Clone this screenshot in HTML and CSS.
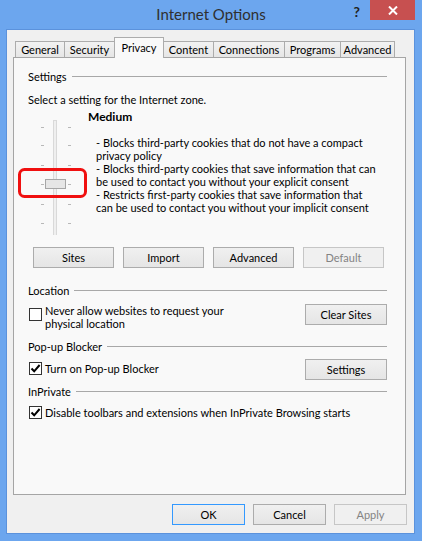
FILE: index.html
```html
<!DOCTYPE html>
<html>
<head>
<meta charset="utf-8">
<link rel="stylesheet" href="styles.css">
</head>
<body>
<div class="window">
  <header class="titlebar">
    <div></div>
    <div class="title">Internet Options</div>
    <div class="controls">
      <span class="help">?</span>
      <span class="close"><svg width="10" height="9" viewBox="0 0 10 9"><path d="M1 0.5 L9 8.5 M9 0.5 L1 8.5" stroke="#fff" stroke-width="2"/></svg></span>
    </div>
  </header>
  <div class="client">
    <nav class="tabs">
      <span class="tab t-general">General</span>
      <span class="tab t-security">Security</span>
      <span class="tab t-privacy selected">Privacy</span>
      <span class="tab t-content">Content</span>
      <span class="tab t-connections">Connections</span>
      <span class="tab t-programs">Programs</span>
      <span class="tab t-advanced">Advanced</span>
    </nav>
    <section class="panel">
      <div class="group-head"><span>Settings</span><i class="rule"></i></div>
      <p class="zone">Select a setting for the Internet zone.</p>
      <div class="privacy">
        <svg class="slider" width="70" height="125" viewBox="0 0 70 125">
          <rect x="35.5" y="10.5" width="3" height="120" fill="#efefef" stroke="#d9d9d9"/>
          <g fill="#b8b8b8">
            <rect x="23" y="17" width="3" height="1"/><rect x="50" y="17" width="3" height="1"/>
            <rect x="23" y="35" width="3" height="1"/><rect x="50" y="35" width="3" height="1"/>
            <rect x="23" y="55" width="3" height="1"/><rect x="50" y="55" width="3" height="1"/>
            <rect x="23" y="74" width="3" height="1"/><rect x="50" y="74" width="3" height="1"/>
            <rect x="23" y="94" width="3" height="1"/><rect x="50" y="94" width="3" height="1"/>
            <rect x="23" y="113" width="3" height="1"/><rect x="50" y="113" width="3" height="1"/>
          </g>
          <rect x="27.5" y="69.5" width="20" height="9" fill="#e6e6e6" stroke="#a6a6a6"/>
          <rect x="1.5" y="59.5" width="66" height="27" rx="5" fill="none" stroke="#f01010" stroke-width="3"/>
        </svg>
        <div class="level">
          <div class="level-name">Medium</div>
          <div class="level-desc">- Blocks third-party cookies that do not have a compact<br>privacy policy<br>- Blocks third-party cookies that save information that can<br>be used to contact you without your explicit consent<br>- Restricts first-party cookies that save information that<br>can be used to contact you without your implicit consent</div>
        </div>
      </div>
      <div class="btn-row">
        <span class="btn">Sites</span>
        <span class="btn">Import</span>
        <span class="btn">Advanced</span>
        <span class="btn disabled">Default</span>
      </div>

      <div class="group-head g-location"><span>Location</span><i class="rule"></i></div>
      <div class="opt-row r-location">
        <label class="check c-location"><span class="box"></span><span>Never allow websites to request your<br>physical location</span></label>
        <span class="btn btn-side">Clear Sites</span>
      </div>

      <div class="group-head g-popup"><span>Pop-up Blocker</span><i class="rule"></i></div>
      <div class="opt-row r-popup">
        <label class="check c-popup"><span class="box"><svg width="11" height="11" viewBox="0 0 11 11"><path d="M1.5 5.5 L4.2 8.3 L9.6 2" fill="none" stroke="#000" stroke-width="2"/></svg></span><span>Turn on Pop-up Blocker</span></label>
        <span class="btn btn-side">Settings</span>
      </div>

      <div class="group-head g-inprivate"><span>InPrivate</span><i class="rule"></i></div>
      <label class="check c-inprivate"><span class="box"><svg width="11" height="11" viewBox="0 0 11 11"><path d="M1.5 5.5 L4.2 8.3 L9.6 2" fill="none" stroke="#000" stroke-width="2"/></svg></span><span>Disable toolbars and extensions when InPrivate Browsing starts</span></label>
    </section>
    <div class="dialog-buttons">
      <span class="btn dlg default">OK</span>
      <span class="btn dlg">Cancel</span>
      <span class="btn dlg disabled">Apply</span>
    </div>
  </div>
</div>
</body>
</html>
```

FILE: styles.css
```css
html, body {
  margin: 0;
  padding: 0;
}
body {
  font-family: Lato, "Open Sans", sans-serif;
  font-size: 11px;
  line-height: 13px;
  color: #000;
}
.window {
  width: 422px;
  height: 541px;
  background: #6ca6ee;
  display: flex;
  flex-direction: column;
}
.titlebar {
  flex: none;
  height: 30px;
  display: grid;
  grid-template-columns: 1fr auto 1fr;
}
.title {
  font-size: 15px;
  line-height: 29px;
  color: #2f2f2f;
}
.controls {
  justify-self: end;
  display: flex;
  align-items: flex-start;
}
.help {
  font-weight: bold;
  font-size: 14px;
  line-height: 14px;
  margin-top: 5px;
  margin-right: 10px;
  color: #222;
}
.close {
  width: 45px;
  height: 20px;
  background: #c75050;
  display: flex;
  align-items: center;
  justify-content: center;
  margin-right: 7px;
}
.client {
  flex: 1;
  margin: 0 8px 8px 7px;
  background: #f0f0f0;
  display: flex;
  flex-direction: column;
  padding: 7px 8px 8px 6px;
  box-shadow: 0 0 0 1px #5b92dc;
}
.tabs {
  display: flex;
  align-items: flex-end;
  height: 21px;
  padding-left: 2px;
  margin-bottom: -1px;
  position: relative;
  z-index: 1;
}
.tab {
  box-sizing: border-box;
  height: 16px;
  margin-bottom: 1px;
  margin-right: -1px;
  border: 1px solid #acacac;
  border-bottom: none;
  background: linear-gradient(#f2f2f2, #e6e6e6);
  text-align: center;
  line-height: 13px;
  padding-top: 1px;
}
.tab.selected {
  height: 21px;
  margin-bottom: 0;
  background: #f9f9f9;
  padding-top: 3px;
  position: relative;
  z-index: 2;
}
.t-general { width: 50px; }
.t-security { width: 51px; }
.t-privacy { width: 50px; }
.t-content { width: 51px; }
.t-connections { width: 72px; }
.t-programs { width: 57px; }
.t-advanced { width: 55px; }

.panel {
  flex: 1;
  background: #f9f9f9;
  border: 1px solid #a5a5a5;
  padding: 12px 18px 0 14px;
  display: flex;
  flex-direction: column;
}
.group-head {
  display: flex;
  align-items: center;
  gap: 5px;
}
.rule {
  flex: 1;
  border-top: 1px solid #a8a8a8;
}
.zone {
  margin: 10px 0 0;
}
.privacy {
  display: flex;
  margin-top: 4px;
}
.slider {
  flex: none;
  margin-left: -10px;
}
.level-name {
  font-weight: bold;
  font-size: 12px;
}
.level-desc {
  margin-top: 13px;
  padding-left: 8px;
  white-space: nowrap;
}
.btn-row {
  display: flex;
  gap: 9px;
  margin-top: 12px;
  padding-left: 5px;
}
.btn {
  box-sizing: border-box;
  width: 81px;
  height: 21px;
  border: 1px solid #acacac;
  background: linear-gradient(#f0f0f0, #e5e5e5);
  text-align: center;
  line-height: 19px;
  flex: none;
}
.btn.disabled {
  color: #838383;
  border-color: #c6c6c6;
  background: #f0f0f0;
}
.btn-side {
  width: 82px;
}
.g-location { margin-top: 16px; }
.r-location { margin-top: 7px; }
.g-popup { margin-top: 10px; }
.r-popup { margin-top: 6px; }
.g-inprivate { margin-top: 5px; }
.opt-row {
  display: flex;
  justify-content: space-between;
  align-items: flex-start;
}
.check {
  display: flex;
  gap: 3px;
  padding-left: 1px;
  align-items: flex-start;
}
.box {
  box-sizing: border-box;
  width: 13px;
  height: 13px;
  border: 1px solid #333;
  background: #fff;
  flex: none;
  display: flex;
}
.c-location .box { margin-top: 4px; }
.c-popup { margin-top: 3px; }
.c-inprivate { margin-top: 8px; }

.dialog-buttons {
  display: flex;
  justify-content: flex-end;
  gap: 8px;
  margin-top: 9px;
  margin-right: -1px;
}
.btn.dlg {
  width: 73px;
}
.btn.default {
  border-color: #3399ff;
}
```
